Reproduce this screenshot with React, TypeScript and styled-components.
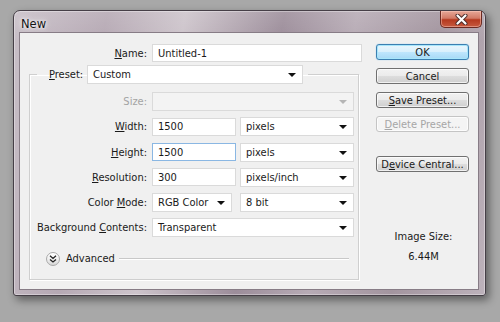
import * as React from 'react';
import styled, { createGlobalStyle, css } from 'styled-components';

const GlobalStyle = createGlobalStyle`
  html, body {
    margin: 0;
    background: #a8a8a8;
  }
  body {
    font-family: "DejaVu Sans Condensed", "DejaVu Sans", sans-serif;
    font-size: 11px;
    color: #1a1a1a;
  }
`;

const Page = styled.div`
  width: 500px;
  height: 322px;
  padding: 10px 0 0 13px;
  box-sizing: border-box;
  overflow: hidden;
`;

const Window = styled.div`
  width: 473px;
  height: 286px;
  box-sizing: border-box;
  border: 1px solid #463f47;
  border-radius: 7px 7px 3px 3px;
  padding: 0 6px 5px 5px;
  display: flex;
  flex-direction: column;
  background:
    linear-gradient(180deg, rgba(255, 255, 255, 0.12), rgba(255, 255, 255, 0) 30px),
    linear-gradient(100deg, #c8bfc7 0%, #b6a9b4 18%, #cdc4cb 33%, #9c8d9a 52%, #b7abb5 66%, #a3959f 82%, #bdb2bb 100%);
  box-shadow: 3px 4px 9px rgba(0, 0, 0, 0.45), inset 0 0 0 1px rgba(255, 255, 255, 0.35);
`;

const TitleBar = styled.div`
  height: 21px;
  display: flex;
  align-items: flex-start;
  justify-content: space-between;
`;

const Title = styled.div`
  font-family: "DejaVu Sans", sans-serif;
  font-size: 11.5px;
  margin: 6px 0 0 2px;
  color: #141414;
  text-shadow: 0 0 6px #fff, 0 0 3px #fff;
`;

const CloseButton = styled.div`
  width: 42px;
  height: 17px;
  margin-right: -3px;
  box-sizing: border-box;
  border: 1px solid #6c2a22;
  border-top: none;
  border-radius: 0 0 5px 5px;
  background: linear-gradient(180deg, #e7a797 0%, #d27a66 45%, #b5391f 55%, #c65a3f 100%);
  box-shadow: inset 0 0 0 1px rgba(255, 210, 200, 0.45);
  display: flex;
  align-items: center;
  justify-content: center;
`;

const Client = styled.div`
  flex: 1;
  display: flex;
  background: #f0f0f0;
  border: 1px solid #877c86;
`;

const FormColumn = styled.div`
  width: 356px;
  padding-top: 11px;
`;

const NameRow = styled.div`
  display: flex;
  align-items: center;
`;

const Label = styled.span<{ $width?: number; $disabled?: boolean }>`
  width: ${(p) => p.$width ?? 122}px;
  box-sizing: border-box;
  padding-right: 5px;
  text-align: right;
  white-space: nowrap;
  color: ${(p) => (p.$disabled ? '#a3a3a3' : '#1a1a1a')};
`;

const fieldBase = css`
  height: 19px;
  box-sizing: border-box;
  background: #fff;
  border: 1px solid #dadada;
  display: flex;
  align-items: center;
  padding-left: 5px;
  white-space: nowrap;
`;

const TextField = styled.div<{ $width: number; $focused?: boolean }>`
  ${fieldBase}
  width: ${(p) => p.$width}px;
  height: 18px;
  border-color: ${(p) => (p.$focused ? '#8ab7e3' : '#dadada')};
`;

const Dropdown = styled.div<{ $width: number; $disabled?: boolean; $span?: boolean }>`
  ${fieldBase}
  width: ${(p) => p.$width}px;
  position: relative;
  grid-column: ${(p) => (p.$span ? 'span 2' : 'auto')};
  background: ${(p) => (p.$disabled ? '#f3f3f3' : '#fff')};
  &::after {
    content: '';
    position: absolute;
    right: 6px;
    top: 7px;
    border-left: 4px solid transparent;
    border-right: 4px solid transparent;
    border-top: 4px solid ${(p) => (p.$disabled ? '#b5b5b5' : '#111')};
  }
`;

const Group = styled.fieldset`
  margin: 3px 0 0 9px;
  width: 330px;
  height: 215px;
  box-sizing: border-box;
  padding: 0;
  border: 1px solid #cfcfcf;
  box-shadow: inset 1px 1px 0 #fff, 1px 1px 0 #fff;
`;

const Legend = styled.legend`
  margin-left: 7px;
  padding: 0 5px 0 12px;
  display: flex;
  align-items: center;
`;

const FieldGrid = styled.div`
  display: grid;
  grid-template-columns: 122px 88px 114px;
  grid-auto-rows: 19px;
  row-gap: 6.25px;
  align-items: center;
  margin-top: 8px;
`;

const AdvancedRow = styled.div`
  display: flex;
  align-items: center;
  margin: 14px 0 0 16px;
  height: 15px;
`;

const ChevronCircle = styled.div`
  width: 14px;
  height: 14px;
  box-sizing: border-box;
  border-radius: 50%;
  border: 1px solid #a9a9a9;
  background: linear-gradient(180deg, #ffffff 0%, #ececec 60%, #d6d6d6 100%);
  display: flex;
  align-items: center;
  justify-content: center;
`;

const AdvancedText = styled.span`
  margin-left: 6px;
`;

const Rule = styled.div`
  flex: 0 0 230px;
  margin-left: 4px;
  height: 1px;
  background: #c8c8c8;
  border-bottom: 1px solid #fff;
`;

const ButtonColumn = styled.div`
  width: 93px;
  padding-top: 11px;
  display: flex;
  flex-direction: column;
  align-items: stretch;
`;

const Button = styled.div<{ $default?: boolean; $disabled?: boolean; $gap?: number }>`
  height: 16px;
  box-sizing: border-box;
  margin-top: ${(p) => p.$gap ?? 8}px;
  border-radius: 3px;
  display: flex;
  align-items: center;
  justify-content: center;
  white-space: nowrap;
  border: 1px solid ${(p) => (p.$default ? '#3c7fb1' : p.$disabled ? '#c4c4c4' : '#707070')};
  color: ${(p) => (p.$disabled ? '#a6a6a6' : '#1a1a1a')};
  background: ${(p) =>
    p.$default
      ? 'linear-gradient(180deg, #eaf6fd 0%, #d9f0fc 48%, #bee6fd 52%, #a7d9f5 100%)'
      : p.$disabled
        ? '#f4f4f4'
        : 'linear-gradient(180deg, #f2f2f2 0%, #ebebeb 48%, #dddddd 52%, #cfcfcf 100%)'};
  box-shadow: ${(p) =>
    p.$default ? 'inset 0 0 0 1px #a7e6fb, 0 0 1px #5fb7ee' : 'inset 0 0 0 1px rgba(255,255,255,0.7)'};
`;

const InfoLabel = styled.div<{ $gap: number }>`
  margin-top: ${(p) => p.$gap}px;
  text-align: center;
  padding-left: 2px;
`;

const U = styled.span`
  text-decoration: underline;
  text-underline-offset: 1px;
`;

function CloseGlyph() {
  return (
    <svg width="13" height="11" viewBox="0 0 13 11">
      <path d="M2.5 1.5 L10.5 9.5 M10.5 1.5 L2.5 9.5" stroke="#4a2a28" strokeWidth="4" strokeLinecap="round" />
      <path d="M2.5 1.5 L10.5 9.5 M10.5 1.5 L2.5 9.5" stroke="#fff" strokeWidth="2.2" strokeLinecap="round" />
    </svg>
  );
}

function DoubleChevron() {
  return (
    <svg width="8" height="8" viewBox="0 0 8 8">
      <path d="M1 0.8 L4 3.4 L7 0.8 M1 4.4 L4 7 L7 4.4" stroke="#222" strokeWidth="1.3" fill="none" />
    </svg>
  );
}

export default function App() {
  return (
    <>
      <GlobalStyle />
      <Page>
        <Window>
          <TitleBar>
            <Title>New</Title>
            <CloseButton>
              <CloseGlyph />
            </CloseButton>
          </TitleBar>
          <Client>
            <FormColumn>
              <NameRow>
                <Label $width={132}>
                  <U>N</U>ame:
                </Label>
                <TextField $width={210}>Untitled-1</TextField>
              </NameRow>
              <Group>
                <Legend>
                  <Label $width={38}>
                    <U>P</U>reset:
                  </Label>
                  <Dropdown $width={216}>Custom</Dropdown>
                </Legend>
                <FieldGrid>
                  <Label $disabled>Size:</Label>
                  <Dropdown $width={202} $span $disabled />

                  <Label>
                    <U>W</U>idth:
                  </Label>
                  <TextField $width={84}>1500</TextField>
                  <Dropdown $width={114}>pixels</Dropdown>

                  <Label>
                    <U>H</U>eight:
                  </Label>
                  <TextField $width={84} $focused>
                    1500
                  </TextField>
                  <Dropdown $width={114}>pixels</Dropdown>

                  <Label>
                    <U>R</U>esolution:
                  </Label>
                  <TextField $width={84}>300</TextField>
                  <Dropdown $width={114}>pixels/inch</Dropdown>

                  <Label>
                    Color <U>M</U>ode:
                  </Label>
                  <Dropdown $width={80}>RGB Color</Dropdown>
                  <Dropdown $width={114}>8 bit</Dropdown>

                  <Label>
                    Background <U>C</U>ontents:
                  </Label>
                  <Dropdown $width={202} $span>
                    Transparent
                  </Dropdown>
                </FieldGrid>
                <AdvancedRow>
                  <ChevronCircle>
                    <DoubleChevron />
                  </ChevronCircle>
                  <AdvancedText>Advanced</AdvancedText>
                  <Rule />
                </AdvancedRow>
              </Group>
            </FormColumn>
            <ButtonColumn>
              <Button $default $gap={0}>
                OK
              </Button>
              <Button>Cancel</Button>
              <Button>
                <U>S</U>ave Preset...
              </Button>
              <Button $disabled>
                <U>D</U>elete Preset...
              </Button>
              <Button $gap={24}>
                D<U>e</U>vice Central...
              </Button>
              <InfoLabel $gap={58}>Image Size:</InfoLabel>
              <InfoLabel $gap={7}>6.44M</InfoLabel>
            </ButtonColumn>
          </Client>
        </Window>
      </Page>
    </>
  );
}
